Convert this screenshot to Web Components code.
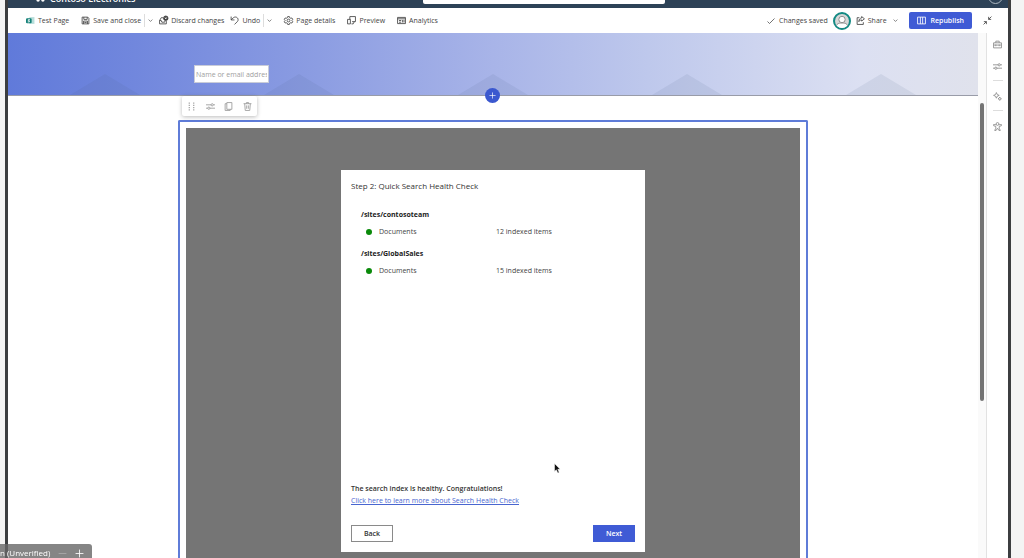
<!DOCTYPE html>
<html lang="en">
  <head>
    <meta charset="UTF-8" />
    <meta name="viewport" content="width=device-width, initial-scale=1.0" />
    <title>Test Page</title>
    <style>
      body {
        margin: 0;
        height: 100vh;
        overflow: hidden;
        background: #f4f4f4;
        color: #444;
        font: 7px/10px "Open Sans", "Noto Sans", sans-serif;
      }
    </style>
  </head>
  <body>
    <page-editor></page-editor>
    <meeting-label>n (Unverified)</meeting-label>
    <mouse-pointer></mouse-pointer>

    <script>
      const icons = {
        save: `<path d="M2 2h10l2 2v10H2zM5 2v4h6V2M4.500 14V9h7v5M6 11.500h4"/>`,
        discard: `<path d="M7 3H4L1 8v6h12V9M1 8h3l1 3h5l1-3"/><circle cx="12" cy="4" r="4" fill="currentColor"/><path stroke="#fff" d="M10.800 2.800l2.400 2.400M13.200 2.800l-2.400 2.400"/>`,
        undo: `<path d="M2 1v6h6M2 7l4-4c6-4 11 3 7 7l-5 5"/>`,
        gear: `<path d="M6.500 1h3l.5 2 2 1 2-.5 1.500 2.500L14 8l1.500 2-1.500 2.500-2-.5-2 1-.5 2h-3L6 13l-2-1-2 .5L.5 10 2 8 .5 6 2 3.500 4 4l2-1z"/><circle cx="8" cy="8" r="2.500"/>`,
        preview: `<path d="M5 1h10v9H9M5 1v5M1 6h5v8H1zM8 14h3l2-4"/>`,
        analytics: `<path d="M1 2.500h14v11H1zM1 5h14M3.500 8h4M3.500 11h4M10 7v4.500M12.500 7v4.500"/>`,
        check: `<path d="M1 9l4 4L15 3"/>`,
        share: `<path d="M6 3H2v12h11v-4M10 1l5 4-5 4V7C7 7 5.500 8.500 5 10c0-4 2-6 5-6.500z"/>`,
        book: `<path d="M1 2h14v12H1zM6 2v12M10 2v12"/>`,
        collapse: `<path d="M15 1l-5 5M10 1.500V6h4.500M1 15l5-5M1.500 10H6v4.500"/>`,
        chevron: `<path stroke-width="2" d="M2 5l6 6 6-6"/>`,
        toolbox: `<path d="M1 5h14v9H1zM5 5V2h6v3M1 9h14M5 8v3M11 8v3"/>`,
        sliders: `<path d="M0 5h9M13 5h3M0 11h3M7 11h9"/><circle cx="11" cy="5" r="2"/><circle cx="5" cy="11" r="2"/>`,
        sparkle: `<path d="M6 1l1.500 3.500L11 6 7.500 7.500 6 11 4.500 7.500 1 6l3.500-1.500zM12 9l1 2 2 1-2 1-1 2-1-2-2-1 2-1z"/>`,
        person: `<circle cx="8" cy="3.500" r="2.500"/><path d="M5.500 5L1 4.500v2L5 8v3l-2 4h2.500L8 11l2.500 4H13l-2-4V8l4-1.500v-2L10.500 5"/>`,
        grip: `<g fill="currentColor" stroke="none"><path d="M3 1h2v2H3zM11 1h2v2h-2zM3 5h2v2H3zM11 5h2v2h-2zM3 9h2v2H3zM11 9h2v2h-2zM3 13h2v2H3zM11 13h2v2h-2z"/></g>`,
        copy: `<path d="M5 1h9v12H5zM5 3H2v12h9v-2"/>`,
        trash: `<path d="M1 3h14M6 3V1h4v2M3 3l1 12h8l1-12M6.500 6v6M9.500 6v6"/>`,
        plus: `<path d="M8 1v14M1 8h14"/>`,
        minus: `<path d="M1 8h14"/>`,
        waffle: `<g fill="currentColor" stroke="none"><circle cx="3" cy="3" r="2"/><circle cx="8" cy="3" r="2"/><circle cx="13" cy="3" r="2"/><circle cx="3" cy="8" r="2"/><circle cx="8" cy="8" r="2"/><circle cx="13" cy="8" r="2"/><circle cx="3" cy="13" r="2.500"/><circle cx="10" cy="13" r="2.500"/></g>`,
        page: `<path fill="#b7dedb" stroke="none" d="M6 2h9v12H6z"/><rect x="0" y="4" width="10" height="9" rx="2" fill="#138078" stroke="none"/><path stroke="#fff" d="M7 6.500H4v2h2v2H3"/>`,
      };

      // Attaches an open shadow root with the given markup
      class BaseElement extends HTMLElement {
        constructor() {
          super();
          this.attachShadow({ mode: "open" });
        }

        connectedCallback() {
          this.shadowRoot.innerHTML = this.template();
        }
      }

      class UiIcon extends BaseElement {
        template() {
          return `
            <style>
              :host { display: block; flex: none; width: var(--icon-size, 9px); height: var(--icon-size, 9px); }
              svg { display: block; width: 100%; height: 100%; overflow: visible; }
            </style>
            <svg viewBox="0 0 16 16" fill="none" stroke="currentColor" stroke-width="1.5" aria-hidden="true">
              ${icons[this.getAttribute("name")]}
            </svg>`;
        }
      }

      // Button of the command bar; "split" adds a divider and a menu arrow
      class CommandButton extends BaseElement {
        template() {
          const split = this.hasAttribute("split");
          return `
            <style>
              :host { display: flex; align-items: center; }
              button {
                display: flex; align-items: center; gap: 3px;
                padding: 0; border: 0; background: none;
                color: inherit; font: inherit; white-space: nowrap;
              }
              .more { --icon-size: 5px; height: 13px; margin-left: 3px; padding-left: 3px; border-left: 1px solid #ddd; }
            </style>
            <button type="button"><ui-icon name="${this.getAttribute("icon")}"></ui-icon><slot></slot></button>
            ${split ? `<button type="button" class="more" aria-label="More"><ui-icon name="chevron"></ui-icon></button>` : ""}`;
        }
      }

      class SiteHeader extends BaseElement {
        template() {
          return `
            <style>
              :host { display: block; height: 8px; overflow: hidden; background: #2d4257; color: #fff; }
              .row {
                display: grid; grid-template-columns: 8fr 242px 7fr; align-items: end;
                height: 22px; margin-top: -18px; padding: 0 5px 0 28px;
              }
              .brand { display: flex; gap: 3px; align-items: end; font-size: 9px; line-height: 10px; font-weight: 600; --icon-size: 11px; }
              .brand ui-icon { margin-bottom: 2px; }
              input { box-sizing: border-box; height: 16px; border: 0; border-radius: 2px; background: #fff; }
              .account { justify-self: end; width: 13px; height: 13px; border: 1px solid #aeb9c2; border-radius: 50%; }
            </style>
            <div class="row">
              <div class="brand"><ui-icon name="waffle"></ui-icon>Contoso Electronics</div>
              <input type="search" aria-label="Search">
              <div class="account"></div>
            </div>`;
        }
      }

      class CommandBar extends BaseElement {
        template() {
          return `
            <style>
              :host { display: flex; align-items: center; height: 25px; padding: 0 16px 0 18px; background: #fff; }
              nav { display: flex; align-items: center; gap: 12px; }
              .tight { display: flex; gap: 6px; }
              .end { margin-left: auto; gap: 5px; }
              .status { display: flex; align-items: center; gap: 4px; --icon-size: 8px; }
              .avatar { width: 14px; height: 14px; border: 2px solid #148a84; border-radius: 50%; overflow: hidden; background: #d8d8d8; }
              .avatar svg { display: block; }
              .share { display: flex; align-items: center; gap: 6px; margin-right: 6px; }
              .share > ui-icon { --icon-size: 5px; }
              .publish {
                display: flex; align-items: center; justify-content: center; gap: 5px;
                height: 17px; padding: 0 8px; border: 0; border-radius: 2px;
                background: #3f5bd5; color: #fff; font: inherit; font-weight: 600;
              }
              .fold { padding: 0; border: 0; margin-left: 6px; background: none; color: inherit; }
            </style>
            <nav aria-label="Page commands">
              <command-button icon="page">Test Page</command-button>
              <div class="tight">
                <command-button icon="save" split>Save and close</command-button>
                <command-button icon="discard">Discard changes</command-button>
                <command-button icon="undo" split>Undo</command-button>
              </div>
              <command-button icon="gear">Page details</command-button>
              <command-button icon="preview">Preview</command-button>
              <command-button icon="analytics">Analytics</command-button>
            </nav>
            <nav class="end" aria-label="Publishing">
              <span class="status"><ui-icon name="check"></ui-icon>Changes saved</span>
              <span class="avatar">
                <svg viewBox="0 0 14 14"><path fill="#fff" stroke="#8e8e8e" d="M1 15c0-6 3-6 6-6s6 0 6 6z"/><circle cx="7" cy="5.500" r="3.200" fill="#fff" stroke="#8e8e8e"/></svg>
              </span>
              <span class="share"><command-button icon="share">Share</command-button><ui-icon name="chevron"></ui-icon></span>
              <button type="button" class="publish"><ui-icon name="book"></ui-icon>Republish</button>
              <button type="button" class="fold" aria-label="Collapse"><ui-icon name="collapse"></ui-icon></button>
            </nav>`;
        }
      }

      class PageBanner extends BaseElement {
        template() {
          return `
            <style>
              :host {
                display: block; position: relative; box-sizing: border-box; height: 63px;
                border-bottom: 1px solid #999ca8;
                background: linear-gradient(90deg, #607ada, #7187dd 13%, #8c9de2 32%, #a8b4e8 50%, #bec8ec 66%, #dce0f2 88%, #e0e2ec);
              }
              .hills { display: flex; height: 62px; align-items: end; }
              .hills i { flex: 1; display: flex; justify-content: center; }
              .hills i::before { content: ""; width: 70px; height: 21px; background: #50608c; opacity: 0.1; clip-path: polygon(50% 0, 100% 100%, 0 100%); }
              .author { position: absolute; bottom: 12px; left: calc(50% - 299px); }
              input {
                display: block; box-sizing: border-box; width: 75px; height: 18px; padding: 0 1px;
                border: 1px solid #c9ccd8; background: #fff; font: inherit;
              }
              input::placeholder { color: #a0a0a0; }
              .add {
                position: absolute; bottom: -8px; left: calc(50% - 8px); z-index: 1;
                display: grid; place-content: center; width: 15px; height: 15px; padding: 0;
                border: 0; border-radius: 50%; background: #3b58cf; color: #fff; --icon-size: 7px;
              }
            </style>
            <div class="hills"><i></i><i></i><i></i><i></i><i></i></div>
            <div class="author"><input type="text" aria-label="Author" placeholder="Name or email address"></div>
            <button type="button" class="add" aria-label="Add section"><ui-icon name="plus"></ui-icon></button>`;
        }
      }

      class WebPart extends BaseElement {
        template() {
          return `
            <style>
              :host {
                display: flex; position: relative; box-sizing: border-box; flex: 1;
                width: 100%; max-width: 630px; margin: 24px auto 0; padding: 6px 6px 0;
                border: 2px solid #5f7cd8; border-bottom: 0; border-radius: 2px 2px 0 0;
              }
              .tools {
                position: absolute; left: 2px; top: -26px; box-sizing: border-box;
                display: flex; align-items: center; justify-content: space-between;
                width: 75px; height: 20px; padding: 0 5px;
                background: #fff; border-radius: 2px; box-shadow: 0 1px 4px #0004; color: #999;
              }
              .tools button { padding: 0; border: 0; background: none; color: inherit; }
              .stage { flex: 1; display: flex; justify-content: center; align-items: start; padding-top: 42px; background: #757575; }
            </style>
            <div class="tools">
              <button type="button" aria-label="Move"><ui-icon name="grip"></ui-icon></button>
              <button type="button" aria-label="Edit"><ui-icon name="sliders"></ui-icon></button>
              <button type="button" aria-label="Duplicate"><ui-icon name="copy"></ui-icon></button>
              <button type="button" aria-label="Delete"><ui-icon name="trash"></ui-icon></button>
            </div>
            <div class="stage"><slot></slot></div>`;
        }
      }

      // One site with the index state of its library
      class SiteStatus extends BaseElement {
        template() {
          return `
            <style>
              :host { display: block; }
              h3 { margin: 0 0 7px; font-size: 7px; line-height: 10px; font-weight: 700; color: #222; }
              .row { display: grid; grid-template-columns: 18px 117px 1fr; align-items: center; }
              .dot { width: 6px; height: 6px; margin-left: 5px; border-radius: 50%; background: #0a8a0a; }
            </style>
            <h3>${this.getAttribute("site")}</h3>
            <div class="row"><span class="dot"></span><span>Documents</span><span><slot></slot></span></div>`;
        }
      }

      class HealthDialog extends BaseElement {
        template() {
          return `
            <style>
              :host {
                display: flex; flex-direction: column; box-sizing: border-box;
                width: 304px; height: 382px; padding: 10px; background: #fff;
              }
              h2 { margin: 0; font-size: 8px; line-height: 12px; font-weight: 400; color: #333; }
              .sites { display: flex; flex-direction: column; gap: 12px; padding: 18px 10px; }
              .result { margin: auto 0 2px; font-weight: 600; color: #333; }
              a { color: #4966d0; }
              footer { display: flex; justify-content: space-between; margin-top: 19px; }
              button { box-sizing: border-box; width: 42px; height: 17px; padding: 0; border: 1px solid #8a8a8a; background: #fff; color: #333; font: inherit; font-weight: 600; }
              .primary { border-color: #3f5bd5; background: #3f5bd5; color: #fff; }
            </style>
            <h2>Step 2: Quick Search Health Check</h2>
            <div class="sites"><slot></slot></div>
            <p class="result">The search index is healthy. Congratulations!</p>
            <div><a href="#">Click here to learn more about Search Health Check</a></div>
            <footer><button type="button">Back</button><button type="button" class="primary">Next</button></footer>`;
        }
      }

      class SideRail extends BaseElement {
        template() {
          return `
            <style>
              :host { display: flex; flex-direction: column; align-items: center; width: 21px; padding-top: 7px; border-left: 1px solid #e2e2e2; color: #8a8a8a; }
              button { padding: 0; border: 0; background: none; color: inherit; }
              button + button { margin-top: 13px; }
              hr { width: 10px; margin: 9px 0 11px; border: 0; border-top: 1px solid #ddd; }
            </style>
            <button type="button" aria-label="Toolbox"><ui-icon name="toolbox"></ui-icon></button>
            <button type="button" aria-label="Properties"><ui-icon name="sliders"></ui-icon></button>
            <hr>
            <button type="button" aria-label="Design ideas"><ui-icon name="sparkle"></ui-icon></button>
            <hr>
            <button type="button" aria-label="Accessibility"><ui-icon name="person"></ui-icon></button>`;
        }
      }

      class PageEditor extends BaseElement {
        template() {
          return `
            <style>
              :host {
                display: flex; flex-direction: column; box-sizing: border-box; height: 100vh;
                margin: 0 13px 0 5px; border: solid #3c3e40; border-width: 0 3px; background: #fff;
              }
              main { display: flex; flex: 1; min-height: 0; }
              .canvas { display: flex; flex-direction: column; flex: 1; min-width: 0; }
              .scroll { width: 8px; padding-top: 70px; background: #fafafa; }
              .thumb { width: 4px; height: 298px; margin: 0 auto; border-radius: 2px; background: #747474; }
            </style>
            <site-header></site-header>
            <command-bar></command-bar>
            <main>
              <div class="canvas">
                <page-banner></page-banner>
                <web-part>
                  <health-dialog>
                    <site-status site="/sites/contosoteam">12 indexed items</site-status>
                    <site-status site="/sites/GlobalSales">15 indexed items</site-status>
                  </health-dialog>
                </web-part>
              </div>
              <div class="scroll"><div class="thumb"></div></div>
              <side-rail></side-rail>
            </main>`;
        }
      }

      // Name of the speaker, over the corner of the shared window
      class MeetingLabel extends BaseElement {
        template() {
          return `
            <style>
              :host {
                position: fixed; left: 0; bottom: 0; display: flex; align-items: end; box-sizing: border-box;
                height: 14px; padding-right: 8px; gap: 8px; border-radius: 0 3px 0 0;
                background: #666c; color: #fff; font-size: 8px; line-height: 10px;
              }
              button { padding: 0; border: 0; background: none; color: inherit; --icon-size: 9px; }
              button:first-of-type { color: #aaa; }
            </style>
            <slot></slot>
            <button type="button" aria-label="Zoom out"><ui-icon name="minus"></ui-icon></button>
            <button type="button" aria-label="Zoom in"><ui-icon name="plus"></ui-icon></button>`;
        }
      }

      class MousePointer extends BaseElement {
        template() {
          return `
            <style>
              :host { position: fixed; left: 554px; top: 463px; }
              svg { display: block; }
            </style>
            <svg width="7" height="11" viewBox="0 0 7 11"><path fill="#111" stroke="#fff" stroke-width=".5" d="M.5.5v8l1.800-1.700L3.800 10l1.400-.6-1.400-3.100h2.400z"/></svg>`;
        }
      }

      customElements.define("ui-icon", UiIcon);
      customElements.define("command-button", CommandButton);
      customElements.define("site-header", SiteHeader);
      customElements.define("command-bar", CommandBar);
      customElements.define("page-banner", PageBanner);
      customElements.define("web-part", WebPart);
      customElements.define("site-status", SiteStatus);
      customElements.define("health-dialog", HealthDialog);
      customElements.define("side-rail", SideRail);
      customElements.define("page-editor", PageEditor);
      customElements.define("meeting-label", MeetingLabel);
      customElements.define("mouse-pointer", MousePointer);
    </script>
  </body>
</html>
